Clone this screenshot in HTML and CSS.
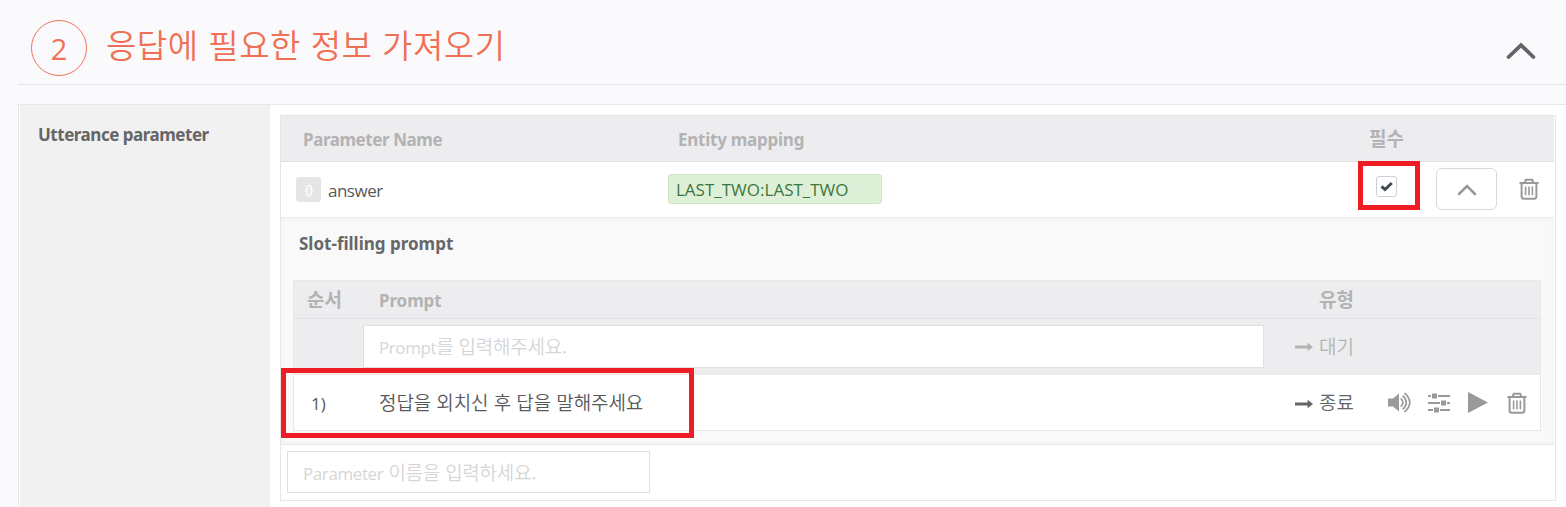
FILE: index.html
```html
<!DOCTYPE html>
<html lang="ko">
<head>
<meta charset="utf-8">
<title>응답에 필요한 정보 가져오기</title>
<link rel="stylesheet" href="styles.css">
</head>
<body>
<svg class="defs" width="0" height="0" aria-hidden="true">
  <symbol id="trash" viewBox="0 0 20 22">
    <path d="M0.5 5h19M5.600 4.600L6.800 1.700h6.400l1.200 2.900M2.600 5v13.600q0 2.100 2.100 2.100h10.600q2.100 0 2.100-2.100V5" fill="none" stroke="currentColor" stroke-width="2"/>
    <path d="M6.600 8.500v8.700M10 8.500v8.700M13.400 8.500v8.700" fill="none" stroke="currentColor" stroke-width="1.600"/>
  </symbol>
  <symbol id="arrow" viewBox="0 0 18 10">
    <path d="M0 3.600h12.600V.8L18 5l-5.400 4.200V6.400H0z" fill="currentColor"/>
  </symbol>
</svg>
<header class="step">
  <span class="step-num">2</span>
  <h1 class="step-title">응답에 필요한 정보 가져오기</h1>
  <svg class="step-toggle" width="30" height="18" viewBox="0 0 30 18"><path d="M2.600 15L15 3.100 27.400 15" fill="none" stroke="#636466" stroke-width="3.800" stroke-linecap="round"/></svg>
</header>
<main class="panel">
  <div class="side"><span class="side-label">Utterance parameter</span></div>
  <div class="content">
    <div class="table">
      <div class="row head">
        <span class="h-name">Parameter Name</span>
        <span class="h-entity">Entity mapping</span>
        <span class="h-req ko">필수</span>
      </div>
      <div class="row param">
        <div class="name"><span class="badge">{}</span><span class="answer">answer</span></div>
        <div class="entity"><span class="tag">LAST_TWO:LAST_TWO</span></div>
        <div class="req"><span class="check"><svg width="13" height="11" viewBox="0 0 13 11"><path d="M1.500 5.300l3.500 3.200L11.800 2" fill="none" stroke="#434a54" stroke-width="3"/></svg></span></div>
        <button class="fold"><svg width="20" height="13" viewBox="0 0 20 13"><path d="M2 11l8-8 8 8" fill="none" stroke="#999" stroke-width="2.600" stroke-linecap="round"/></svg></button>
        <svg class="icon" width="20" height="22"><use href="#trash"/></svg>
      </div>
      <section class="slot">
        <h2 class="slot-title">Slot-filling prompt</h2>
        <div class="prompts">
          <div class="prow phead"><span class="ord ko">순서</span><span class="ptext">Prompt</span><span class="ptype ko">유형</span></div>
          <div class="prow pinput">
            <div class="field"><span class="hint-latin">Prompt</span><span class="hint-ko">를 입력해주세요.</span></div>
            <div class="type"><svg width="18" height="10"><use href="#arrow"/></svg><span>대기</span></div>
          </div>
          <div class="prow pitem">
            <span class="num">1)</span>
            <span class="message">정답을 외치신 후 답을 말해주세요</span>
            <div class="type dark"><svg width="18" height="10"><use href="#arrow"/></svg><span>종료</span></div>
            <div class="tools">
              <svg class="sound" width="22" height="22" viewBox="0 0 22 22"><path d="M0 6.500h5l6-5v18l-6-5H0z" fill="currentColor"/><path d="M12.800 6.300q4.200 4.200 0 8.400M14.800 3.600q7 6.900 0 13.800M16.500 0.800q10.500 9.700 0 19.400" fill="none" stroke="currentColor" stroke-width="1.700"/></svg>
              <svg width="22" height="22" viewBox="0 0 22 22"><path d="M0 4h2.800M10 4h12M0 11h12M19 11h3M0 18h5M12 18h10" stroke="currentColor" stroke-width="1.800"/><path d="M4 1.500h5v5H4zM13 8.500h5v5h-5zM6 15.500h5v5H6z" fill="currentColor"/></svg>
              <svg width="20" height="22" viewBox="0 0 20 22"><path d="M0 0L20 10.500 0 21z" fill="currentColor"/></svg>
              <svg width="20" height="22"><use href="#trash"/></svg>
            </div>
            <div class="mark mark-message"></div>
          </div>
        </div>
      </section>
      <div class="add"><div class="field add-field"><span class="hint-latin">Parameter</span><span class="hint-ko"> 이름을 입력하세요.</span></div></div>
      <div class="mark mark-check"></div>
    </div>
  </div>
</main>
</body>
</html>
```
FILE: styles.css
```css
* { box-sizing: border-box; }
body {
  margin: 0;
  height: 507px;
  overflow: hidden;
  background: #fafafc;
  color: #58595b;
  font: 17px/24px "Open Sans", "Noto Sans CJK KR", sans-serif;
}
svg { display: block; flex: none; }
span { white-space: pre; }
.defs { position: absolute; }

.step {
  display: flex;
  height: 85px;
  margin-left: 18px;
  padding: 20px 30px 0 13px;
  border-bottom: 1px solid #e6e6e8;
  color: #f07056;
}
.step-num {
  width: 56px;
  height: 56px;
  border: 1px solid #f07056;
  border-radius: 50%;
  font-size: 29px;
  line-height: 56px;
  text-align: center;
}
.step-title {
  flex: 1;
  margin: 0 0 0 19px;
  font: 350 33px/48px "Noto Sans CJK KR", sans-serif;
  letter-spacing: 0.5px;
}
.step-toggle { margin-top: 22px; }

.panel {
  display: flex;
  height: 420px;
  margin: 19px 0 0 18px;
  border: 1px solid #e8e8ea;
  border-right: 0;
  background: #fff;
}
.side {
  width: 250px;
  margin-left: 1px;
  padding: 18px 0 0 18px;
  background: #f1f1f1;
}
.side-label, .slot-title, .head, .phead { font-family: "Noto Sans", sans-serif; font-weight: 700; }
.side-label { color: #666; letter-spacing: -0.48px; }
.content { flex: 1; padding: 10px 10px 0; }
.table {
  position: relative;
  width: 1276px;
  height: 386px;
  border: 1px solid #e6e6e8;
}
.row {
  display: grid;
  grid-template-columns: 387px 690px 78px 83px 1fr;
  width: 1273px;
}
.head {
  height: 46px;
  padding-top: 12px;
  border-bottom: 1px solid #e2e2e4;
  background: #ededef;
  color: #b3b3b3;
}
.h-name { padding-left: 22px; letter-spacing: -0.43px; }
.h-entity { padding-left: 10px; letter-spacing: -0.25px; }
.h-req { margin-top: -2px; padding-left: 11px; }
.ko { font-family: "Noto Sans CJK KR", sans-serif; font-weight: 700; font-size: 19px; }
.param { height: 56px; border-bottom: 1px solid #e8e8e8; }
.name { display: flex; gap: 7px; padding: 15px 0 0 15px; }
.badge {
  width: 25px;
  height: 25px;
  border-radius: 3px;
  background: #e5e5e5;
  color: #fff;
  font-size: 13px;
  font-weight: 600;
  letter-spacing: -1px;
  text-align: center;
}
.answer { padding-top: 2px; letter-spacing: -0.5px; }
.entity { padding-top: 12px; }
.tag {
  display: block;
  width: 214px;
  height: 30px;
  padding: 3px 7px;
  border: 1px solid #cfe8c3;
  border-radius: 3px;
  background: #dff0d8;
  color: #3c763d;
}
.req { padding: 14px 0 0 18px; }
.check {
  display: flex;
  align-items: center;
  justify-content: center;
  width: 21px;
  height: 21px;
  border: 1px solid #ccd1d9;
  border-radius: 3px;
}
.fold {
  display: flex;
  align-items: center;
  justify-content: center;
  width: 61px;
  height: 42px;
  margin-top: 6px;
  padding: 0;
  border: 1px solid #d8d8d8;
  border-radius: 6px;
  background: #fff;
}
.icon { margin-top: 16px; color: #999; }

.slot {
  width: 1273px;
  height: 227px;
  padding: 14px 13px 0 12px;
  border-bottom: 1px solid #e8e8e8;
  background: #f9f9f9;
  box-shadow: inset 0 0 6px rgba(0, 0, 0, 0.04);
}
.slot-title { margin: 0 0 24px 6px; color: #666769; font-size: 17px; line-height: 24px; }
.prompts { height: 151px; border: 1px solid #e8e8e8; background: #fff; }
.prow { position: relative; display: flex; }
.phead {
  height: 38px;
  padding-top: 8px;
  border-bottom: 1px solid #e3e3e5;
  background: #ededef;
  color: #b3b3b3;
}
.ord { width: 72px; margin-top: -2px; padding-left: 13px; }
.ptext { width: 940px; padding-left: 13px; letter-spacing: -0.1px; }
.ptype { margin-top: -2px; padding-left: 13px; }
.pinput { height: 56px; padding: 6px 0 0 69px; background: #ededef; border-bottom: 1px solid #e8e8e8; }
.field {
  display: flex;
  width: 901px;
  height: 43px;
  padding: 9px 15px;
  border: 1px solid #e0e0e2;
  background: #fff;
  color: #d6d6d6;
}
.hint-latin { padding-top: 1px; letter-spacing: -0.4px; }
.hint-ko { font: 350 19px/22px "Noto Sans CJK KR", sans-serif; letter-spacing: -0.25px; }
.type {
  display: flex;
  align-items: center;
  gap: 6px;
  height: 24px;
  margin: 9px 0 0 31px;
  color: #b3b3b3;
  font: 350 19px/24px "Noto Sans CJK KR", sans-serif;
}
.type span { height: 24px; }
.type svg { margin-top: 2px; }
.dark { margin: 0; color: #626668; }
.pitem { height: 55px; padding-top: 16px; }
.dark span { line-height: 22px; }
.num { width: 85px; padding: 1px 0 0 17px; }
.message { width: 916px; font: 350 19px/22px "Noto Sans CJK KR", sans-serif; letter-spacing: -0.1px; }
.tools { display: flex; gap: 18px; margin: 1px 0 0 34px; color: #999; }
.tools svg:last-child { margin-left: 1px; }
.sound { overflow: visible; }
.add { padding: 6px; }
.add-field { width: 363px; height: 42px; }

.mark { position: absolute; border: 5px solid #ee1c25; }
.mark-message { left: -13px; top: -7px; width: 413px; height: 70px; }
.mark-check { left: 1077px; top: 45px; width: 62px; height: 49px; }
```
